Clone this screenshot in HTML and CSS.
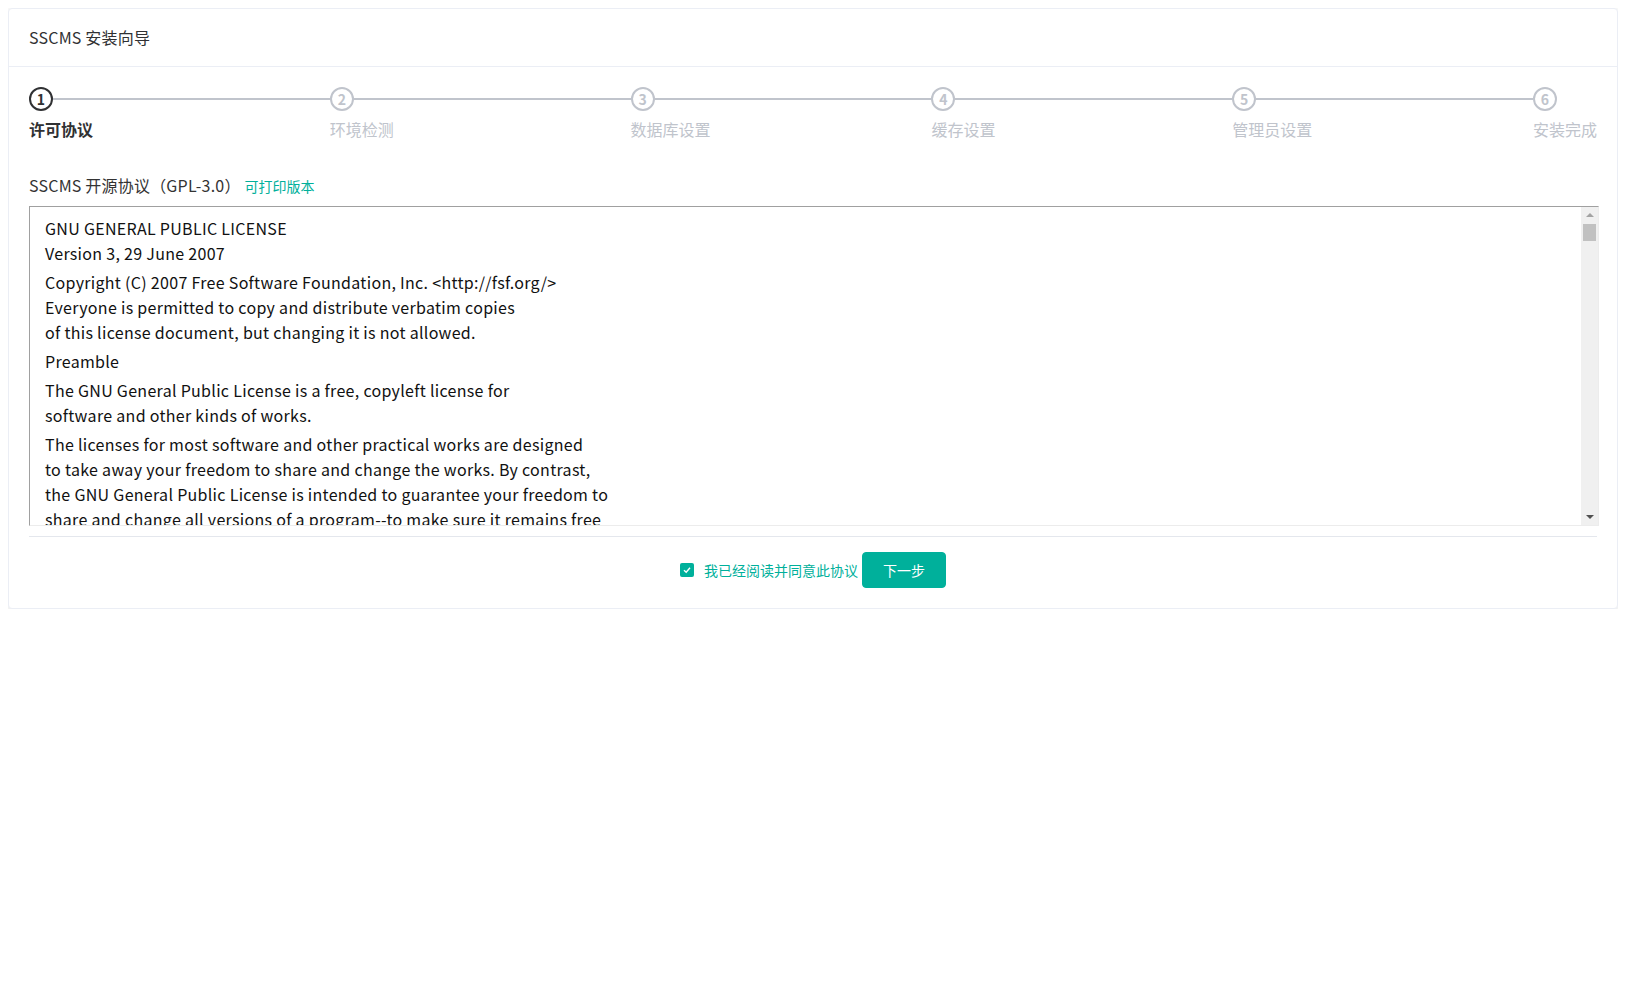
FILE: index.html
```html
<!DOCTYPE html>
<html lang="zh-CN">
<head>
<meta charset="utf-8">
<title>SSCMS 安装向导</title>
<link rel="stylesheet" href="styles.css">
</head>
<body>
<div class="card">
  <div class="card-header">SSCMS 安装向导</div>
  <div class="card-body">
    <div class="steps">
      <div class="step is-process">
        <div class="step-head"><div class="step-line"></div><div class="step-icon">1</div></div>
        <div class="step-title">许可协议</div>
      </div>
      <div class="step">
        <div class="step-head"><div class="step-line"></div><div class="step-icon">2</div></div>
        <div class="step-title">环境检测</div>
      </div>
      <div class="step">
        <div class="step-head"><div class="step-line"></div><div class="step-icon">3</div></div>
        <div class="step-title">数据库设置</div>
      </div>
      <div class="step">
        <div class="step-head"><div class="step-line"></div><div class="step-icon">4</div></div>
        <div class="step-title">缓存设置</div>
      </div>
      <div class="step">
        <div class="step-head"><div class="step-line"></div><div class="step-icon">5</div></div>
        <div class="step-title">管理员设置</div>
      </div>
      <div class="step is-last">
        <div class="step-head"><div class="step-icon">6</div></div>
        <div class="step-title">安装完成</div>
      </div>
    </div>

    <div class="form-label">SSCMS 开源协议（GPL-3.0）<a class="link" href="#">可打印版本</a></div>

    <div class="license-box">
      <div class="license-text">
        <p>GNU GENERAL PUBLIC LICENSE<br>Version 3, 29 June 2007</p>
        <p>Copyright (C) 2007 Free Software Foundation, Inc. &lt;http://fsf.org/&gt;<br>Everyone is permitted to copy and distribute verbatim copies<br>of this license document, but changing it is not allowed.</p>
        <p>Preamble</p>
        <p>The GNU General Public License is a free, copyleft license for<br>software and other kinds of works.</p>
        <p>The licenses for most software and other practical works are designed<br>to take away your freedom to share and change the works. By contrast,<br>the GNU General Public License is intended to guarantee your freedom to<br>share and change all versions of a program--to make sure it remains free<br>software for all its users.</p>
      </div>
      <div class="scrollbar">
        <div class="sb-arrow sb-up"></div>
        <div class="sb-track"><div class="sb-thumb"></div></div>
        <div class="sb-arrow sb-down"></div>
      </div>
    </div>

    <div class="divider"></div>

    <div class="footer">
      <label class="checkbox">
        <span class="checkbox-box">
          <svg width="10" height="10" viewBox="0 0 10 10"><path d="M2 5.2 L4.2 7.2 L8 2.8" fill="none" stroke="#fff" stroke-width="1.4"/></svg>
        </span>
        <span class="checkbox-label">我已经阅读并同意此协议</span>
      </label>
      <button class="btn-primary" type="button">下一步</button>
    </div>
  </div>
</div>
</body>
</html>
```

FILE: styles.css
```css
html, body {
  background: #fff;
}
body {
  margin: 8px;
  font-family: "Noto Sans CJK SC", "Noto Sans", sans-serif;
  color: #303133;
  font-size: 14px;
}

.card {
  background: #fff;
  border: 1px solid #ebeef5;
  border-radius: 4px;
  box-shadow: 0 2px 12px 0 rgba(0, 0, 0, 0.14);
}

.card-header {
  padding: 18px 20px;
  border-bottom: 1px solid #ebeef5;
  font-size: 16px;
  line-height: 21px;
  letter-spacing: 0.2px;
  color: #303133;
}

.card-body {
  padding: 20px;
}

/* steps */
.steps {
  display: flex;
}
.step {
  flex: 1 1 20%;
  min-width: 0;
}
.step.is-last {
  flex: 0 0 auto;
}
.step-head {
  position: relative;
  height: 24px;
}
.step-line {
  position: absolute;
  top: 11px;
  left: 0;
  right: 0;
  height: 2px;
  background: #c0c4cc;
}
.step-icon {
  position: relative;
  z-index: 1;
  width: 24px;
  height: 24px;
  box-sizing: border-box;
  border: 2px solid #c0c4cc;
  border-radius: 50%;
  background: #fff;
  color: #c0c4cc;
  display: flex;
  align-items: center;
  justify-content: center;
  font-size: 14px;
  font-weight: 700;
  line-height: 1;
}
.step-title {
  font-size: 16px;
  line-height: 36px;
  color: #c0c4cc;
  white-space: nowrap;
}
.step.is-process .step-icon {
  border-color: #303133;
  color: #303133;
}
.step.is-process .step-title {
  color: #303133;
  font-weight: 700;
}

/* form */
.form-label {
  margin-top: 18px;
  line-height: 40px;
  font-size: 16px;
  letter-spacing: 0.2px;
  color: #333;
}
.link {
  color: #00b09b;
  text-decoration: none;
  font-size: 14px;
  letter-spacing: 0;
  margin-left: 4px;
}

.license-box {
  display: flex;
  height: 318px;
  margin-right: -2px;
  border-style: solid;
  border-width: 1px;
  border-color: #a0a0a0 #ececec #ececec #a0a0a0;
  background: #fff;
  overflow: hidden;
}
.license-text {
  flex: 1;
  min-width: 0;
  padding: 9px 15px 0;
  font-size: 16px;
  line-height: 25px;
  letter-spacing: 0.3px;
  color: #111;
  overflow: hidden;
}
.license-text p {
  margin: 0 0 4px;
  white-space: nowrap;
}

.scrollbar {
  width: 17px;
  flex: 0 0 17px;
  background: #f0f0f0;
  display: flex;
  flex-direction: column;
}
.sb-arrow {
  height: 17px;
  position: relative;
}
.sb-up::after,
.sb-down::after {
  content: "";
  position: absolute;
  left: 5px;
  width: 0;
  height: 0;
  border-left: 4px solid transparent;
  border-right: 4px solid transparent;
}
.sb-up::after {
  top: 6px;
  border-bottom: 4px solid #a3a3a3;
}
.sb-down::after {
  top: 7px;
  border-top: 4px solid #505050;
}
.sb-track {
  flex: 1;
  padding: 0 2px;
}
.sb-thumb {
  height: 17px;
  background: #c1c1c1;
}

.divider {
  height: 1px;
  background: #e4e7ed;
  margin-top: 10px;
}

.footer {
  display: flex;
  justify-content: center;
  align-items: center;
  padding-top: 15px;
}
.checkbox {
  display: flex;
  align-items: center;
  cursor: pointer;
}
.checkbox-box {
  width: 14px;
  height: 14px;
  border-radius: 2px;
  background: #00b09b;
  display: flex;
  align-items: center;
  justify-content: center;
}
.checkbox-label {
  margin-left: 10px;
  font-size: 14px;
  color: #00b09b;
  line-height: 20px;
}
.btn-primary {
  margin-left: 4px;
  height: 36px;
  padding: 0 20px;
  border: 1px solid #00b09b;
  border-radius: 4px;
  background: #00b09b;
  color: #fff;
  font-family: inherit;
  font-size: 14px;
  cursor: pointer;
}
```
